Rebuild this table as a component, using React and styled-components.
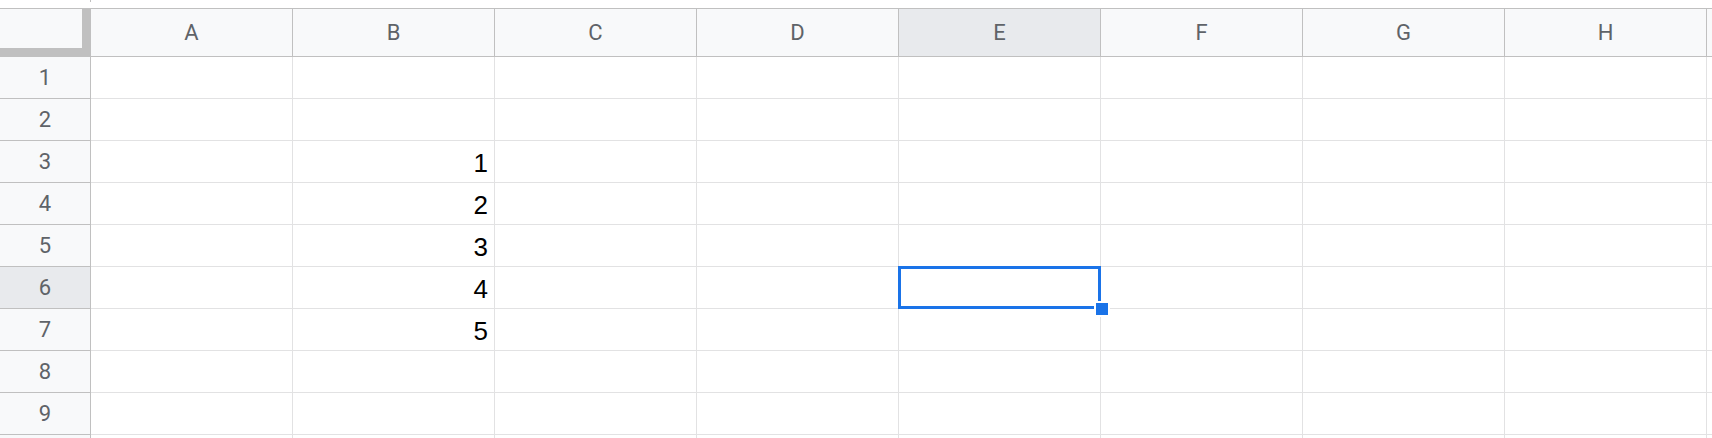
import React from 'react';
import styled, { createGlobalStyle } from 'styled-components';

const COL_W = 202;
const ROW_H = 42;
const HEAD_H = 48;
const ROWHEAD_W = 91;
const COLS = ['A', 'B', 'C', 'D', 'E', 'F', 'G', 'H', 'I'];
const VISIBLE_COLS = 8;
const ROWS = [1, 2, 3, 4, 5, 6, 7, 8, 9, 10];
const VISIBLE_ROWS = 9;
const DATA = { 'B3': '1', 'B4': '2', 'B5': '3', 'B6': '4', 'B7': '5' };
const SEL = { col: 4, row: 5 };

const Global = createGlobalStyle`
  html, body { margin: 0; padding: 0; background: #ffffff; overflow: hidden; }
  * { box-sizing: border-box; }
`;

const Page = styled.div`
  width: 1712px;
  height: 438px;
  overflow: hidden;
  display: flex;
  flex-direction: column;
  background: #ffffff;
`;

const TopStrip = styled.div`
  height: 8px;
  flex: none;
  display: flex;
`;

const Tick = styled.div`
  margin-left: 90px;
  width: 1px;
  height: 2px;
  background: #c0c0c0;
`;

const Sheet = styled.div`
  position: relative;
  display: grid;
  grid-template-columns: ${ROWHEAD_W}px repeat(${COLS.length}, ${COL_W}px);
  grid-template-rows: ${HEAD_H}px repeat(${ROWS.length}, ${ROW_H}px);
  border-top: 1px solid #c0c0c0;
  flex: none;
`;

const Corner = styled.div`
  background: #f8f9fa;
  border-right: 9px solid #c0c0c0;
  border-bottom: 9px solid #c0c0c0;
`;

const ColHeader = styled.div`
  display: flex;
  align-items: center;
  justify-content: center;
  background: ${p => (p.$active ? '#e8eaed' : '#f8f9fa')};
  border-right: 1px solid #c0c0c0;
  border-bottom: 1px solid #c0c0c0;
  font-family: Roboto, "Liberation Sans", sans-serif;
  font-size: 22px;
  color: #5f6368;
`;

const RowHeader = styled.div`
  display: flex;
  align-items: center;
  justify-content: center;
  background: ${p => (p.$active ? '#e8eaed' : '#f8f9fa')};
  border-right: 1px solid #c0c0c0;
  border-bottom: 1px solid #c0c0c0;
  font-family: Roboto, "Liberation Sans", sans-serif;
  font-size: 22px;
  color: #5f6368;
`;

const Cell = styled.div`
  display: flex;
  align-items: flex-end;
  justify-content: flex-end;
  padding: 0 6px 4px 0;
  border-right: 1px solid #e2e2e3;
  border-bottom: 1px solid #e2e2e3;
  font-family: "Liberation Sans", Arial, sans-serif;
  font-size: 26px;
  line-height: 30px;
  color: #000000;
  overflow: hidden;
  white-space: nowrap;
`;

const Selection = styled.div`
  position: absolute;
  border: 3px solid #1a73e8;
  pointer-events: none;
`;

const Handle = styled.div`
  position: absolute;
  width: 16px;
  height: 16px;
  background: #1a73e8;
  border: 2px solid #ffffff;
`;

export default function App() {
  const selLeft = ROWHEAD_W + SEL.col * COL_W - 1;
  const selTop = HEAD_H + SEL.row * ROW_H - 1;
  return (
    <Page>
      <Global />
      <TopStrip>
        <Tick />
      </TopStrip>
      <Sheet>
        <Corner />
        {COLS.map((c, i) => (
          <ColHeader key={c} $active={i === SEL.col}>
            {i < VISIBLE_COLS ? c : ''}
          </ColHeader>
        ))}
        {ROWS.map((r, ri) => (
          <React.Fragment key={r}>
            <RowHeader $active={ri === SEL.row}>{ri < VISIBLE_ROWS ? r : ''}</RowHeader>
            {COLS.map(c => (
              <Cell key={c + r}>{DATA[c + r] || ''}</Cell>
            ))}
          </React.Fragment>
        ))}
        <Selection
          style={{ left: selLeft, top: selTop, width: COL_W + 1, height: ROW_H + 1 }}
        />
        <Handle style={{ left: selLeft + COL_W - 6, top: selTop + ROW_H - 7 }} />
      </Sheet>
    </Page>
  );
}
